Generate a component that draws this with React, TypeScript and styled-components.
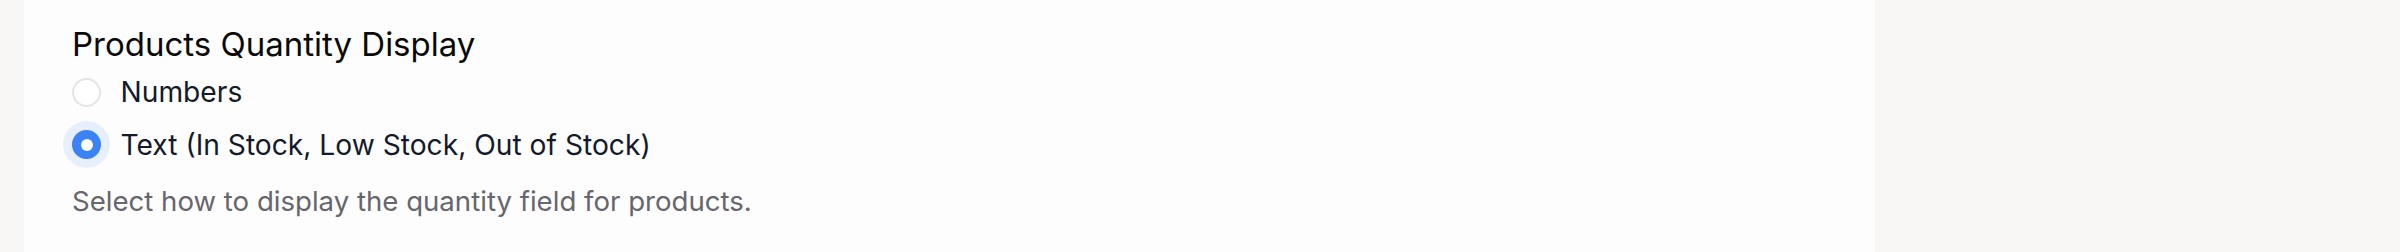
import React, { useState } from "react";
import styled, { createGlobalStyle } from "styled-components";

const Global = createGlobalStyle`
  html, body { margin: 0; padding: 0; }
  body {
    background: #f8f7f6;
    font-family: Inter, "Noto Sans", Arial, sans-serif;
    -webkit-font-smoothing: antialiased;
  }
`;

const Page = styled.div`
  display: flex;
  height: 252px;
  padding-left: 24px;
  background: #f8f7f6;
`;

const Panel = styled.section`
  width: 1851px;
  background: #fdfdfd;
  box-sizing: border-box;
  padding: 20px 0 0 48px;
  display: flex;
  flex-direction: column;
`;

const Heading = styled.h2`
  margin: 0;
  font-size: 33px;
  line-height: 49.5px;
  font-weight: 400;
  color: #0a0a0a;
`;

const Options = styled.div`
  display: flex;
  flex-direction: column;
  gap: 9px;
  margin-top: 1px;
`;

const Option = styled.label`
  display: flex;
  align-items: center;
  gap: 19.5px;
  height: 43.5px;
  font-size: 28.2px;
  color: #141a29;
  cursor: pointer;
`;

const Radio = styled.input.attrs({ type: "radio" })`
  appearance: none;
  margin: 0;
  width: 29px;
  height: 29px;
  border-radius: 50%;
  box-sizing: border-box;
  background: #ffffff;
  border: 2px solid #e3e5e9;
  flex-shrink: 0;
  position: relative;

  &:checked {
    background: #3b82f6;
    border-color: #3b82f6;
    box-shadow: 0 0 0 9px #e8effc;
  }
  &:checked::after {
    content: "";
    position: absolute;
    left: 50%;
    top: 50%;
    width: 12px;
    height: 12px;
    margin: -6px 0 0 -6px;
    border-radius: 50%;
    background: #ffffff;
  }
`;

const Hint = styled.p`
  margin: 13px 0 0;
  font-size: 27.6px;
  line-height: 42.3px;
  color: #66666c;
`;

const options = ["Numbers", "Text (In Stock, Low Stock, Out of Stock)"];

export default function App() {
  const [value, setValue] = useState(1);
  return (
    <>
      <Global />
      <Page>
        <Panel>
          <Heading>Products Quantity Display</Heading>
          <Options>
            {options.map((o, i) => (
              <Option key={o}>
                <Radio
                  name="qty"
                  checked={value === i}
                  onChange={() => setValue(i)}
                />
                {o}
              </Option>
            ))}
          </Options>
          <Hint>Select how to display the quantity field for products.</Hint>
        </Panel>
      </Page>
    </>
  );
}
